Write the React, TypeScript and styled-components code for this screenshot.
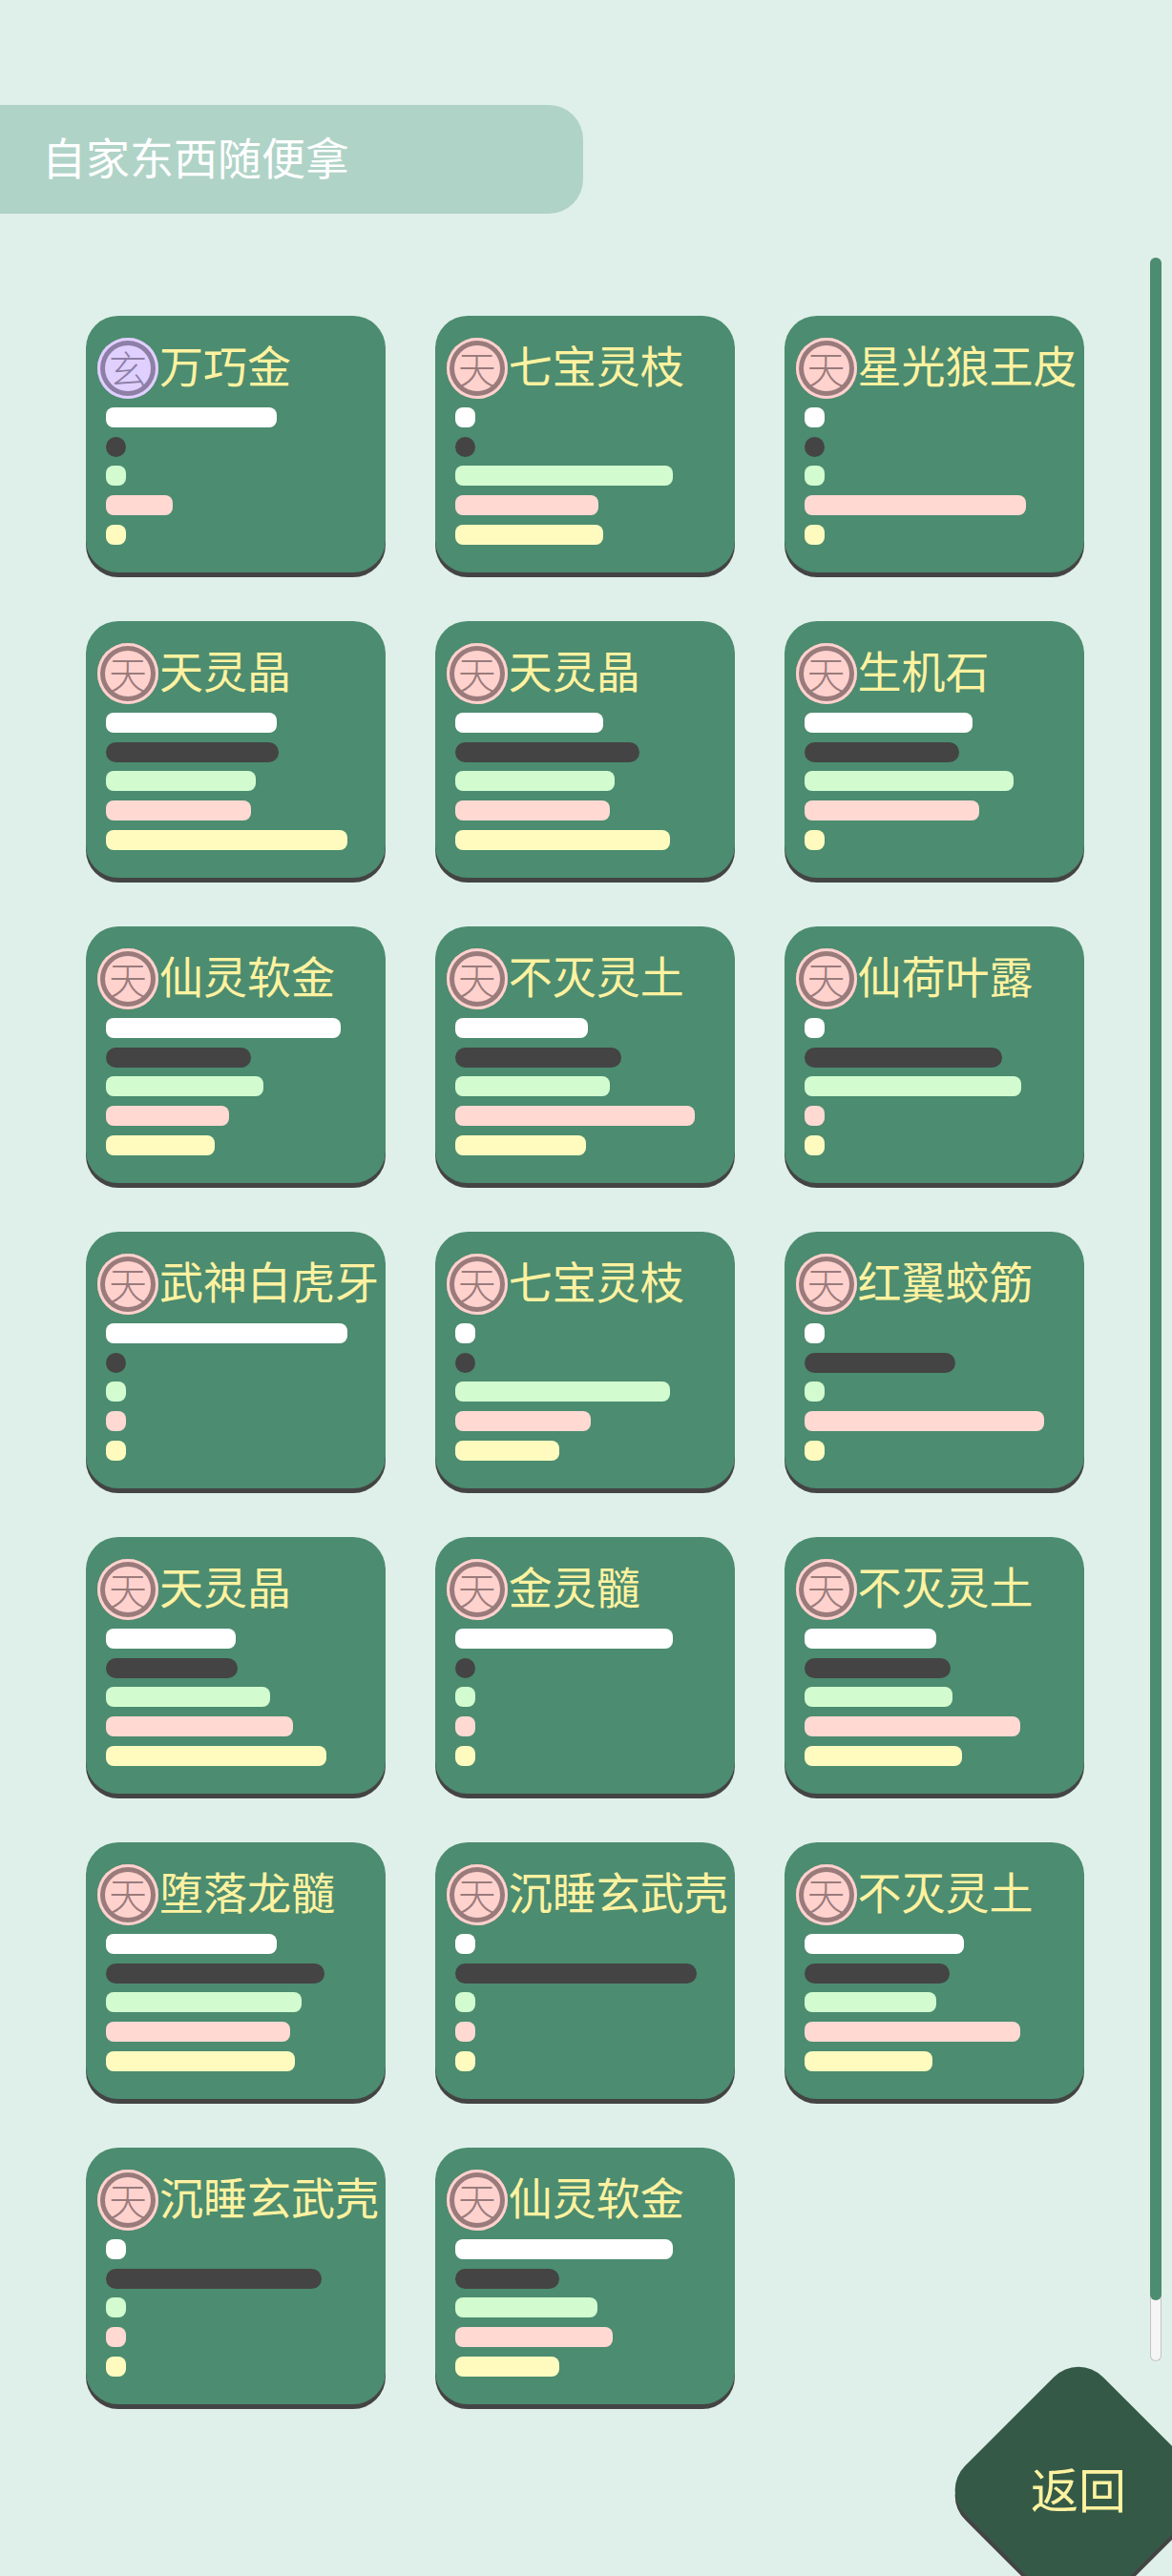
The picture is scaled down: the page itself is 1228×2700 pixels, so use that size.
import React from 'react';
import styled, { createGlobalStyle } from 'styled-components';

const FONT = '"Noto Sans CJK SC", "Noto Sans", sans-serif';

const GlobalStyle = createGlobalStyle`
  html, body {
    margin: 0;
    padding: 0;
    background: #dff0ea;
    font-family: ${FONT};
  }
`;

const Page = styled.div`
  position: relative;
  width: 1228px;
  height: 2700px;
  padding-top: 110px;
  box-sizing: border-box;
  overflow: hidden;
  background: #dff0ea;
`;
const Header = styled.div`
  display: flex;
  align-items: center;
  width: 611px;
  height: 114px;
  box-sizing: border-box;
  padding: 0 0 8px 44px;
  border-radius: 0 36px 36px 0;
  background: #b0d3c7;
  color: #fff;
  font-size: 46px;
  font-weight: 400;
`;
const Body = styled.div`
  display: flex;
  justify-content: space-between;
  margin-top: 46px;
  padding: 0 11px 0 90px;
`;
const Grid = styled.div`
  display: grid;
  grid-template-columns: repeat(3, 314px);
  grid-auto-rows: 269px;
  column-gap: 51.8px;
  row-gap: 51px;
  padding-top: 61px;
`;
const Card = styled.div`
  box-sizing: border-box;
  padding: 23px 12px 0;
  border-radius: 34px;
  background: #4c8c70;
  box-shadow: 0 5px 0 #444;
`;
const TitleRow = styled.div`
  display: flex;
  align-items: center;
  gap: 1px;
  height: 64px;
  margin-bottom: 9px;
`;
const Badge = styled.div<{ $fill: string; $ring: string }>`
  display: flex;
  align-items: center;
  justify-content: center;
  flex: none;
  width: 64px;
  height: 64px;
  box-sizing: border-box;
  padding-bottom: 2px;
  border-radius: 50%;
  background: ${(p) => p.$fill};
  box-shadow: inset 0 0 0 3px ${(p) => p.$fill}, inset 0 0 0 8px ${(p) => p.$ring};
  color: ${(p) => p.$ring};
  font-size: 40px;
  font-weight: 300;
  line-height: 1;
`;
const Name = styled.div`
  margin-bottom: 11px;
  color: #fff2a0;
  font-size: 46px;
  font-weight: 400;
  line-height: 64px;
  white-space: nowrap;
`;
const Bars = styled.div`
  display: flex;
  flex-direction: column;
  align-items: flex-start;
  gap: 9.7px;
  padding-left: 9px;
`;
const Bar = styled.div<{ $color: string; $round?: boolean }>`
  height: 21px;
  min-width: 21px;
  border-radius: ${(p) => (p.$round ? '11px' : '8px')};
  background: ${(p) => p.$color};
`;
const Track = styled.div`
  width: 12px;
  height: 2205px;
  box-sizing: border-box;
  border: 1px solid #c4c4c4;
  border-top: none;
  border-radius: 6px;
  background: #f5f5f5;
`;
const Thumb = styled.div`
  width: 12px;
  height: 2141px;
  margin-left: -1px;
  border-radius: 6px;
  background: #4c8c70;
`;
const BackButton = styled.div`
  position: absolute;
  left: 1028px;
  top: 2508px;
  display: flex;
  align-items: center;
  justify-content: center;
  width: 204px;
  height: 204px;
  color: #fff2a0;
  font-size: 50px;
  font-weight: 400;
  &::before {
    content: '';
    position: absolute;
    inset: 0;
    border-radius: 36px;
    background: #345a47;
    box-shadow: 4px 4px 0 #444;
    transform: rotate(45deg);
  }
`;
const BackLabel = styled.span`
  position: relative;
  padding-bottom: 6px;
`;

const RANKS: Record<string, { fill: string; ring: string }> = {
  玄: { fill: '#e0d0ff', ring: '#8d7fa6' },
  天: { fill: '#ffd2ce', ring: '#9a7b7b' },
};
const BAR_COLORS = ['#fff', '#444', '#d2fcd0', '#ffd9d2', '#fffbbf'];

const items: { rank: string; name: string; bars: number[] }[] = [
  { rank: '玄', name: '万巧金', bars: [179, 21, 21, 70, 21] },
  { rank: '天', name: '七宝灵枝', bars: [21, 21, 228, 150, 155] },
  { rank: '天', name: '星光狼王皮', bars: [21, 21, 21, 232, 21] },
  { rank: '天', name: '天灵晶', bars: [179, 181, 157, 152, 253] },
  { rank: '天', name: '天灵晶', bars: [155, 193, 167, 162, 225] },
  { rank: '天', name: '生机石', bars: [176, 162, 219, 183, 21] },
  { rank: '天', name: '仙灵软金', bars: [246, 152, 165, 129, 114] },
  { rank: '天', name: '不灭灵土', bars: [139, 174, 162, 251, 137] },
  { rank: '天', name: '仙荷叶露', bars: [21, 207, 227, 21, 21] },
  { rank: '天', name: '武神白虎牙', bars: [253, 21, 21, 21, 21] },
  { rank: '天', name: '七宝灵枝', bars: [21, 21, 225, 142, 109] },
  { rank: '天', name: '红翼蛟筋', bars: [21, 158, 21, 251, 21] },
  { rank: '天', name: '天灵晶', bars: [136, 138, 172, 196, 231] },
  { rank: '天', name: '金灵髓', bars: [228, 21, 21, 21, 21] },
  { rank: '天', name: '不灭灵土', bars: [138, 153, 155, 226, 165] },
  { rank: '天', name: '堕落龙髓', bars: [179, 229, 205, 193, 198] },
  { rank: '天', name: '沉睡玄武壳', bars: [21, 253, 21, 21, 21] },
  { rank: '天', name: '不灭灵土', bars: [167, 152, 138, 226, 134] },
  { rank: '天', name: '沉睡玄武壳', bars: [21, 226, 21, 21, 21] },
  { rank: '天', name: '仙灵软金', bars: [228, 109, 149, 165, 109] },
];

export default function App() {
  return (
    <Page>
      <GlobalStyle />
      <Header>自家东西随便拿</Header>
      <Body>
        <Grid>
          {items.map((item, i) => (
            <Card key={i}>
              <TitleRow>
                <Badge $fill={RANKS[item.rank].fill} $ring={RANKS[item.rank].ring}>
                  {item.rank}
                </Badge>
                <Name>{item.name}</Name>
              </TitleRow>
              <Bars>
                {item.bars.map((w, j) => (
                  <Bar key={j} $color={BAR_COLORS[j]} $round={j === 1} style={{ width: w }} />
                ))}
              </Bars>
            </Card>
          ))}
        </Grid>
        <Track>
          <Thumb />
        </Track>
      </Body>
      <BackButton>
        <BackLabel>返回</BackLabel>
      </BackButton>
    </Page>
  );
}
